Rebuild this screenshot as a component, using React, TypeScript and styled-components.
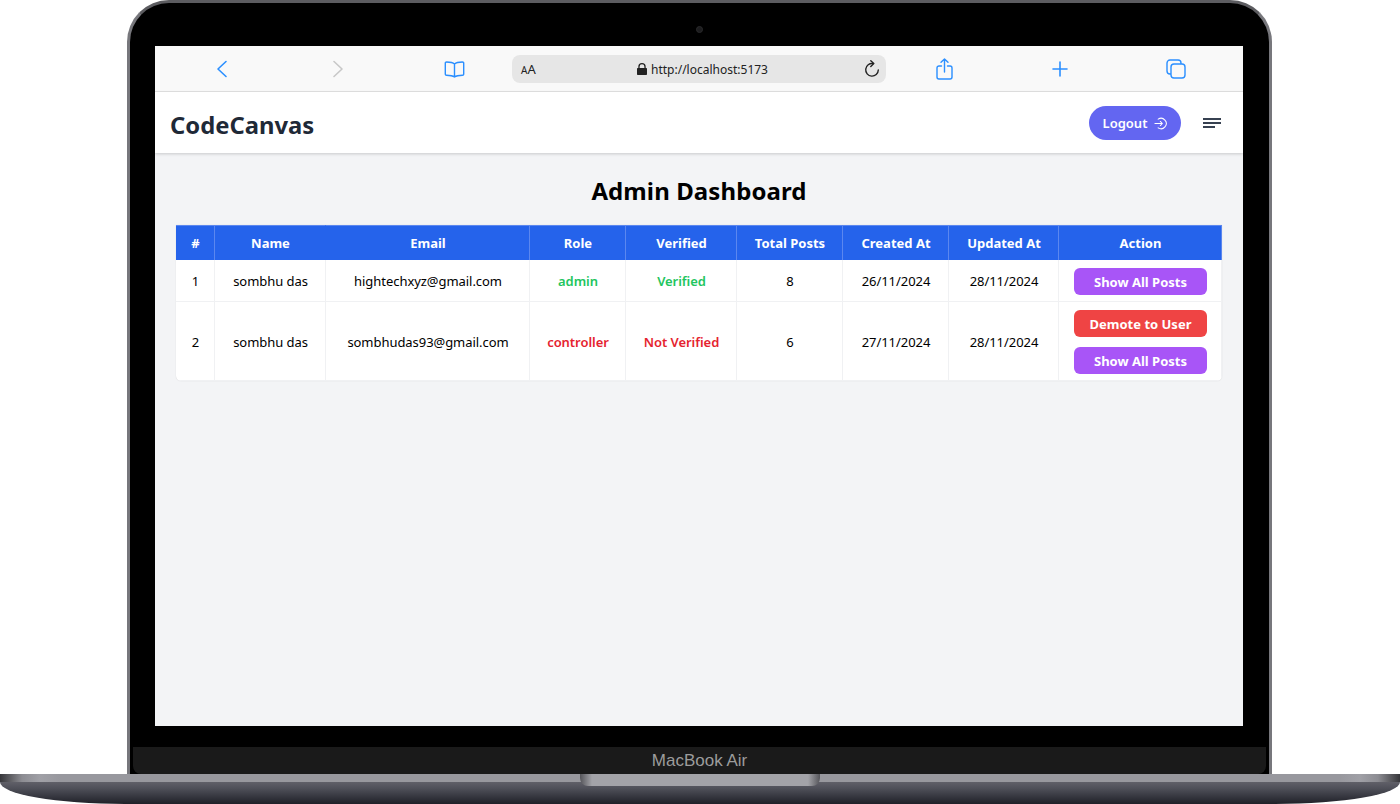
import React from "react";
import styled, { createGlobalStyle } from "styled-components";

const GlobalStyle = createGlobalStyle`
  * { box-sizing: border-box; }
  html, body { margin: 0; padding: 0; background: #fff; }
  body { font-family: "Noto Sans", "Open Sans", sans-serif; overflow: hidden; }
`;

type User = {
  id: number;
  name: string;
  email: string;
  role: string;
  verified: boolean;
  posts: number;
  created: string;
  updated: string;
  canDemote: boolean;
};

const users: User[] = [
  { id: 1, name: "sombhu das", email: "hightechxyz@gmail.com", role: "admin", verified: true, posts: 8, created: "26/11/2024", updated: "28/11/2024", canDemote: false },
  { id: 2, name: "sombhu das", email: "sombhudas93@gmail.com", role: "controller", verified: false, posts: 6, created: "27/11/2024", updated: "28/11/2024", canDemote: true },
];

const columns = [
  { title: "#", width: 39 },
  { title: "Name", width: 111, flush: true },
  { title: "Email", width: 204 },
  { title: "Role", width: 96 },
  { title: "Verified", width: 111 },
  { title: "Total Posts", width: 106 },
  { title: "Created At", width: 106 },
  { title: "Updated At", width: 110 },
  { title: "Action", width: 163 },
];

const BLUE = "#2b8fff";

const App: React.FC = () => {
  return (
    <>
      <GlobalStyle />
      <Page>
        <Lid>
          <CameraStrip>
            <Camera />
          </CameraStrip>
          <Screen>
            <BrowserBar>
              <BarCell>
                <svg width="12" height="18" viewBox="0 0 12 18" fill="none" stroke={BLUE} strokeWidth="1.6" strokeLinecap="round" strokeLinejoin="round">
                  <path d="M10 1.5 2 9l8 7.5" />
                </svg>
              </BarCell>
              <BarCell>
                <svg width="12" height="18" viewBox="0 0 12 18" fill="none" stroke="#c8c8c8" strokeWidth="1.6" strokeLinecap="round" strokeLinejoin="round">
                  <path d="m2 1.5 8 7.5-8 7.5" />
                </svg>
              </BarCell>
              <BarCell>
                <svg width="21" height="17" viewBox="0 0 21 17" fill="none" stroke={BLUE} strokeWidth="1.4" strokeLinejoin="round">
                  <path d="M10.5 3C9 1.6 6.5 1 2.6 1c-.9 0-1.3.4-1.3 1.2v11c0 .7.4 1 1.2 1 3.5 0 6.3.5 8 1.8 1.700-1.300 4.500-1.800 8-1.800.8 0 1.200-.3 1.200-1v-11c0-.8-.4-1.200-1.300-1.200C14.500 1 12 1.600 10.500 3Zm0 0v13" />
                </svg>
              </BarCell>
              <UrlBar>
                <TextSize>
                  <SmallA>A</SmallA>A
                </TextSize>
                <UrlText>
                  <svg width="10" height="12" viewBox="0 0 10 12" fill="#222">
                    <path d="M1.300 5V3.700a3.700 3.700 0 0 1 7.400 0V5h.3c.6 0 1 .4 1 1v5c0 .6-.4 1-1 1H1c-.6 0-1-.4-1-1V6c0-.6.4-1 1-1h.3Zm1.300 0h4.800V3.700a2.400 2.400 0 0 0-4.800 0V5Z" />
                  </svg>
                  http://localhost:5173
                </UrlText>
                <Reload>
                  <svg width="16" height="18" viewBox="0 0 16 18" fill="none" stroke="#222" strokeWidth="1.4" strokeLinecap="round" strokeLinejoin="round">
                    <path d="M9 3.600A6.300 6.300 0 1 0 14.300 10" />
                    <path d="M6.800.8 9.800 3.600 6.800 6.400" />
                  </svg>
                </Reload>
              </UrlBar>
              <BarCell>
                <svg width="17" height="22" viewBox="0 0 17 22" fill="none" stroke={BLUE} strokeWidth="1.4" strokeLinecap="round" strokeLinejoin="round">
                  <path d="M5.500 8H3a2 2 0 0 0-2 2v9a2 2 0 0 0 2 2h11a2 2 0 0 0 2-2v-9a2 2 0 0 0-2-2h-2.500" />
                  <path d="M8.500 14V1M5 4.300 8.500 1 12 4.300" />
                </svg>
              </BarCell>
              <BarCell>
                <svg width="16" height="16" viewBox="0 0 16 16" fill="none" stroke={BLUE} strokeWidth="1.6" strokeLinecap="round">
                  <path d="M8 1v14M1 8h14" />
                </svg>
              </BarCell>
              <BarCell>
                <svg width="20" height="20" viewBox="0 0 20 20" fill="none" stroke={BLUE} strokeWidth="1.4">
                  <rect x="5" y="5" width="14" height="14" rx="3" />
                  <path d="M5 15H4a3 3 0 0 1-3-3V4a3 3 0 0 1 3-3h8a3 3 0 0 1 3 3v1" />
                </svg>
              </BarCell>
            </BrowserBar>
            <NavBar>
              <Logo>CodeCanvas</Logo>
              <NavActions>
                <LogoutButton>
                  Logout
                  <svg width="13" height="13" viewBox="0 0 14 14" fill="none" stroke="#fff" strokeWidth="1.1" strokeLinecap="round" strokeLinejoin="round">
                    <path d="M4.500 2.300A5.600 5.600 0 1 1 4.500 11.700" />
                    <path d="M1 7h8M6.800 4.800 9 7l-2.200 2.200" />
                  </svg>
                </LogoutButton>
                <MenuIcon>
                  <MenuLine $width={18} />
                  <MenuLine $width={18} />
                  <MenuLine $width={12} />
                </MenuIcon>
              </NavActions>
            </NavBar>
            <Main>
              <Title>Admin Dashboard</Title>
              <Table>
                <colgroup>
                  {columns.map((column) => (
                    <col key={column.title} width={column.width} />
                  ))}
                </colgroup>
                <thead>
                  <tr>
                    {columns.map((column) => (
                      <HeadCell key={column.title} $flush={column.flush}>
                        {column.title}
                      </HeadCell>
                    ))}
                  </tr>
                </thead>
                <tbody>
                  {users.map((user) => (
                    <tr key={user.id}>
                      <Cell>{user.id}</Cell>
                      <Cell>{user.name}</Cell>
                      <Cell>{user.email}</Cell>
                      <StatusCell $ok={user.role === "admin"}>{user.role}</StatusCell>
                      <StatusCell $ok={user.verified}>
                        {user.verified ? "Verified" : "Not Verified"}
                      </StatusCell>
                      <Cell>{user.posts}</Cell>
                      <Cell>{user.created}</Cell>
                      <Cell>{user.updated}</Cell>
                      <Cell>
                        <Actions>
                          {user.canDemote && <ActionButton $color="#ef4444">Demote to User</ActionButton>}
                          <ActionButton $color="#a855f7">Show All Posts</ActionButton>
                        </Actions>
                      </Cell>
                    </tr>
                  ))}
                </tbody>
              </Table>
            </Main>
          </Screen>
          <BezelGap />
          <Chin>MacBook Air</Chin>
        </Lid>
        <Base>
          <Notch />
        </Base>
      </Page>
    </>
  );
};

export default App;

const Page = styled.div`
  width: 1400px;
  height: 804px;
  display: flex;
  flex-direction: column;
  align-items: center;
  overflow: hidden;
  background: #fff;
`;

const Lid = styled.div`
  width: 1145px;
  height: 774px;
  margin-left: -1px;
  display: flex;
  flex-direction: column;
  background: #000;
  border: 3px solid #77777c;
  border-top-color: #5c5c60;
  border-bottom: none;
  border-radius: 42px 42px 0 0;
`;

const CameraStrip = styled.div`
  height: 43px;
  padding-top: 9px;
  display: flex;
  align-items: center;
  justify-content: center;
  flex-shrink: 0;
`;

const Camera = styled.div`
  width: 7px;
  height: 7px;
  border-radius: 50%;
  background: #1c1c1e;
  border: 1px solid #2a2a2c;
`;

const Screen = styled.div`
  width: 1088px;
  height: 680px;
  margin-left: 25px;
  flex-shrink: 0;
  display: flex;
  flex-direction: column;
  background: #f3f4f6;
`;

const BrowserBar = styled.div`
  height: 46px;
  flex-shrink: 0;
  padding: 1px 9px 0;
  display: grid;
  grid-template-columns: 116px 116px 116px 374px 116px 116px 116px;
  align-items: center;
  background: #f9f9f9;
  border-bottom: 1px solid #e3e3e3;
`;

const BarCell = styled.div`
  display: flex;
  align-items: center;
  justify-content: center;
`;

const UrlBar = styled.div`
  height: 28px;
  padding: 0 6px 0 9px;
  display: grid;
  grid-template-columns: 44px 1fr 40px;
  align-items: center;
  background: #e6e6e6;
  border-radius: 8px;
  color: #222;
`;

const TextSize = styled.span`
  font-size: 13px;
  line-height: 1;
  margin-top: 1px;
`;

const SmallA = styled.span`
  font-size: 10px;
`;

const UrlText = styled.span`
  display: flex;
  align-items: center;
  justify-content: center;
  gap: 4px;
  font-size: 12px;
`;

const Reload = styled.span`
  display: flex;
  justify-content: flex-end;
`;

const NavBar = styled.header`
  height: 61px;
  flex-shrink: 0;
  padding: 1px 22px 0 15px;
  display: flex;
  align-items: center;
  justify-content: space-between;
  background: #fff;
  box-shadow: 0 1px 3px rgba(0, 0, 0, 0.18);
`;

const Logo = styled.div`
  margin-top: 4px;
  font-size: 23.800px;
  font-weight: 700;
  color: #1f2937;
`;

const NavActions = styled.div`
  display: flex;
  align-items: center;
  gap: 22px;
`;

const LogoutButton = styled.button`
  width: 92px;
  height: 34px;
  display: flex;
  align-items: center;
  justify-content: center;
  gap: 7px;
  border: none;
  border-radius: 17px;
  background: #6366f1;
  color: #fff;
  font-family: inherit;
  font-size: 13px;
  font-weight: 600;
`;

const MenuIcon = styled.div`
  width: 18px;
  display: flex;
  flex-direction: column;
  gap: 2px;
`;

const MenuLine = styled.span<{ $width: number }>`
  display: block;
  width: ${(p) => p.$width}px;
  height: 2px;
  background: #374151;
`;

const Main = styled.main`
  flex: 1;
  padding: 20px 21px 0;
`;

const Title = styled.h1`
  margin: 0 0 16px;
  height: 36px;
  line-height: 36px;
  text-align: center;
  font-size: 24px;
  font-weight: 700;
  letter-spacing: 0.1px;
  color: #000;
`;

const Table = styled.table`
  width: 1046px;
  table-layout: fixed;
  border-collapse: separate;
  border-spacing: 0;
  background: #fff;
  border-radius: 0 0 5px 5px;
  box-shadow: 0 0 1px rgba(0, 0, 0, 0.2);
  overflow: hidden;
`;

const HeadCell = styled.th<{ $flush?: boolean }>`
  height: 35px;
  padding: 0 0 0 1px;
  background: #2563eb;
  color: #fff;
  font-size: 13px;
  font-weight: 700;
  text-align: center;
  border-top: 1px solid #5b87ef;
  border-right: 1px solid ${(p) => (p.$flush ? "#2563eb" : "#5b87ef")};
`;

const Cell = styled.td`
  padding: 1px 0 0 1px;
  font-size: 13px;
  letter-spacing: -0.05px;
  color: #000;
  text-align: center;
  border-right: 1px solid #f0f1f3;
  border-bottom: 1px solid #f0f1f3;
`;

const StatusCell = styled(Cell)<{ $ok: boolean }>`
  font-weight: 600;
  color: ${(p) => (p.$ok ? "#22c55e" : "#e5232f")};
`;

const Actions = styled.div`
  padding: 7px 14px 6px;
  display: flex;
  flex-direction: column;
  gap: 10px;
`;

const ActionButton = styled.button<{ $color: string }>`
  height: 27px;
  padding: 0;
  border: none;
  border-radius: 6px;
  background: ${(p) => p.$color};
  color: #fff;
  font-family: inherit;
  font-size: 13px;
  font-weight: 700;
`;

const BezelGap = styled.div`
  height: 21px;
  flex-shrink: 0;
`;

const Chin = styled.div`
  flex: 1;
  margin: 0 3px;
  display: flex;
  align-items: center;
  justify-content: center;
  background: #1a1a1a;
  border-radius: 0 0 8px 8px;
  color: #9c9c9c;
  font-family: "Liberation Sans", Arial, sans-serif;
  font-size: 17px;
`;

const Base = styled.div`
  width: 1400px;
  height: 30px;
  flex-shrink: 0;
  display: flex;
  justify-content: center;
  border-radius: 0 0 125px 125px / 0 0 22px 22px;
  background:
    linear-gradient(90deg, #36363a 0, #8c8c92 22px, #a0a0a6 40px, #98989e 60px, #98989e 1340px, #a0a0a6 1360px, #8c8c92 1378px, #36363a 100%) top / 100% 8px no-repeat,
    linear-gradient(180deg, #606068 8px, #50515a 14px, #1f2028 100%);
`;

const Notch = styled.div`
  width: 240px;
  height: 12px;
  background: linear-gradient(90deg, #55555a 0, #a3a3a8 12px, #a3a3a8 228px, #55555a 100%);
  border-radius: 0 0 8px 8px;
`;
